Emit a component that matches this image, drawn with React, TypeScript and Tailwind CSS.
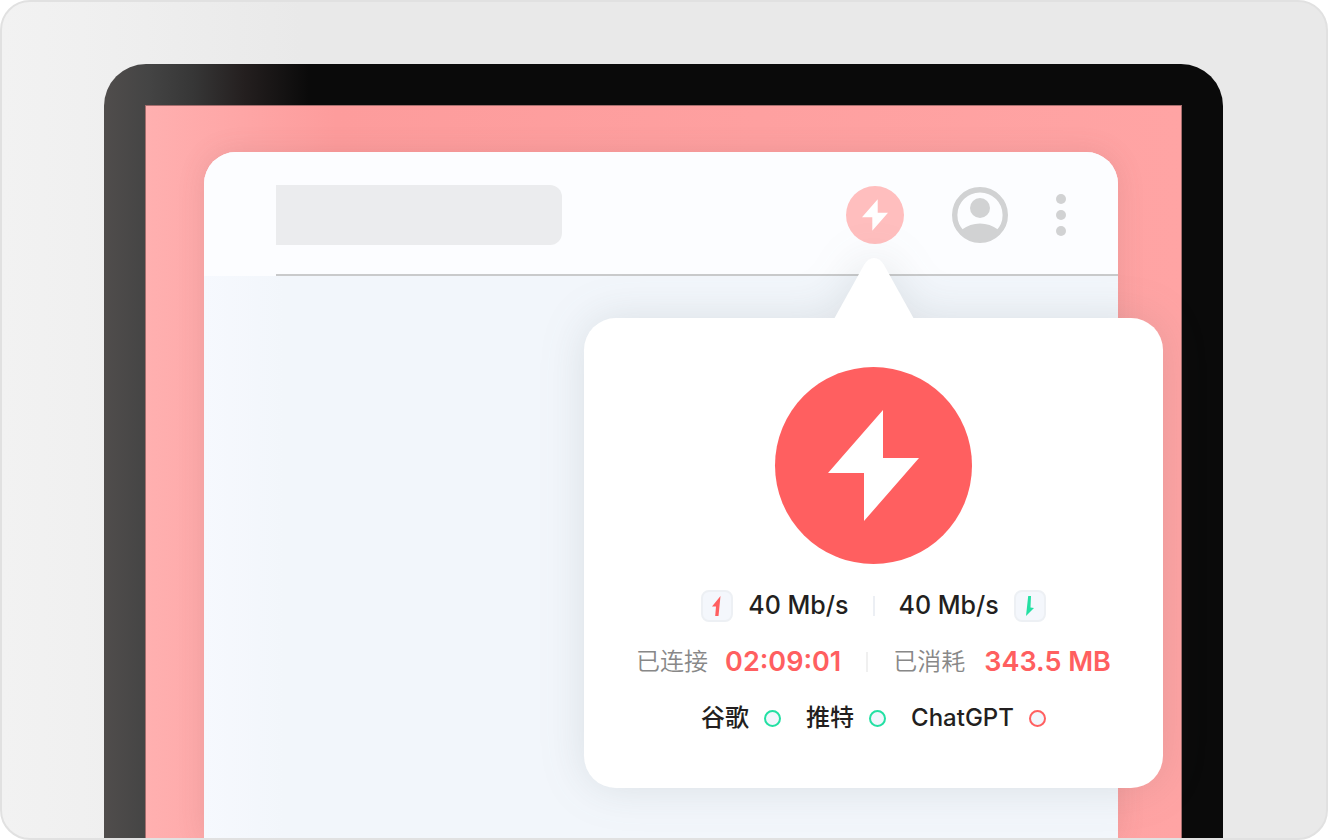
import React from "react";

function Bolt({ className }: { className: string }) {
  return (
    <svg viewBox="0 0 91 111" className={className} fill="currentColor" aria-hidden="true">
      <path d="M55 0V48H91L36 111V63H0Z" />
    </svg>
  );
}

function Divider({ className }: { className: string }) {
  return <span className={`h-5 w-0.5 shrink-0 ${className}`} />;
}

function SpeedBadge({ children, color }: { children: React.ReactNode; color: string }) {
  return (
    <span
      className={`flex size-8 shrink-0 items-center justify-center rounded-lg border-2 border-[#edf0f4] bg-[#f4f7fc] ${color}`}
    >
      {children}
    </span>
  );
}

function Site({ name, ring }: { name: string; ring: string }) {
  return (
    <li className="flex items-center gap-[15px]">
      <span>{name}</span>
      <span className={`size-[17px] rounded-full border-2 bg-[#f2f6fc] ${ring}`} />
    </li>
  );
}

function Toolbar() {
  return (
    <header className="rounded-t-[32px] bg-[#fcfdff] pl-[72px]">
      <div className="flex h-[124px] items-center border-b-2 border-[#c9cacb] pt-1 pr-[51px]">
        <input
          aria-label="Address"
          className="h-[60px] w-[286px] rounded-r-xl bg-[#ebecee] px-4 outline-none"
        />
        <button
          aria-label="Connection"
          className="ml-auto flex size-[58px] items-center justify-center rounded-full bg-[#ffbebe] text-white"
        >
          <Bolt className="h-8 w-[26px]" />
        </button>
        <button aria-label="Account" className="ml-12 size-14 text-[#d1d2d3]">
          <svg viewBox="0 0 56 56" className="size-14" aria-hidden="true">
            <circle cx="28" cy="28" r="25.3" fill="none" stroke="currentColor" strokeWidth="5.4" />
            <circle cx="28" cy="21" r="10" fill="currentColor" />
            <path d="M10 42.5Q18 36.5 28 36.5T46 42.5Q39 53 28 53T10 42.5Z" fill="currentColor" />
          </svg>
        </button>
        <button aria-label="More" className="ml-[47px] flex w-3 flex-col items-center gap-1.5">
          <span className="size-2.5 rounded-full bg-[#d1d2d3]" />
          <span className="size-2.5 rounded-full bg-[#d1d2d3]" />
          <span className="size-2.5 rounded-full bg-[#d1d2d3]" />
        </button>
      </div>
    </header>
  );
}

function StatusPopup() {
  return (
    <section
      aria-label="Connection status"
      className="absolute top-[166px] -right-[45px] flex h-[470px] w-[579px] flex-col items-center rounded-[32px] bg-white pt-[49px] drop-shadow-[0_0_22px_rgba(80,90,90,0.14)]"
    >
      <svg
        viewBox="0 0 80 61"
        className="absolute -top-[60px] left-[250px] h-[61px] w-20 text-white"
        fill="currentColor"
        aria-hidden="true"
      >
        <path d="M0 61L30 7Q34 0 40 0T50 7L80 61Z" />
      </svg>
      <button
        aria-label="Disconnect"
        className="flex size-[197px] shrink-0 items-center justify-center rounded-full bg-[#ff5f60] text-white"
      >
        <Bolt className="h-[111px] w-[91px]" />
      </button>
      <div className="mt-[26px] flex h-8 items-center text-[25px] font-medium whitespace-nowrap">
        <SpeedBadge color="text-[#ff5f60]">
          <svg viewBox="0 0 10 20" className="h-5 w-2.5" fill="currentColor" aria-hidden="true">
            <path d="M8.500 0L0 10.500H4L3.200 20H6.500Z" />
          </svg>
        </SpeedBadge>
        <span className="ml-[15px]">40 Mb/s</span>
        <Divider className="mx-6 bg-[#eceff4]" />
        <span className="mr-[15px]">40 Mb/s</span>
        <SpeedBadge color="text-[#23e0a3]">
          <svg viewBox="0 0 10 20" className="h-5 w-2.5" fill="currentColor" aria-hidden="true">
            <path d="M3.200 0H6L5.500 11.500L9 12L1 20Z" />
          </svg>
        </SpeedBadge>
      </div>
      <div className="mt-5 flex h-10 items-center text-[27px] font-semibold whitespace-nowrap text-[#ff5f60]">
        <span className="mr-[17px] text-2xl font-[350] text-[#888888]">已连接</span>
        <span>02:09:01</span>
        <Divider className="mx-[25px] bg-[#f0f0f0]" />
        <span className="mr-[19px] text-2xl font-[350] text-[#888888]">已消耗</span>
        <span>343.5 MB</span>
      </div>
      <ul className="mt-4 flex h-10 items-center gap-[25px] text-2xl font-medium whitespace-nowrap">
        <Site name="谷歌" ring="border-[#23e0a3]" />
        <Site name="推特" ring="border-[#23e0a3]" />
        <Site name="ChatGPT" ring="border-[#ff5f60]" />
      </ul>
    </section>
  );
}

export default function App() {
  return (
    <main className="flex min-h-screen flex-col overflow-hidden rounded-[30px] border-2 border-[#e1e1e1] bg-[linear-gradient(90deg,#f2f2f2_0,#f0f0f0_80px,#e9e9e9_300px)] px-[102px] pt-[62px] font-['Inter','Noto_Sans_CJK_SC',sans-serif] text-[#231f20]">
      <div className="mr-px flex flex-1 flex-col rounded-t-[42px] bg-[linear-gradient(90deg,#504d4c_0,#444444_45px,#363636_90px,#241f1f_140px,#0a0a0a_205px)] px-[41px] pt-[41px]">
        <div className="flex flex-1 flex-col border border-b-0 border-[#a56d6d] bg-[linear-gradient(90deg,#ffb0b0_0,#fd9c9c_190px,#ffa4a4_100%)] pt-[46px] pr-[63px] pl-[58px]">
          <div className="relative flex min-h-[686px] flex-1 flex-col rounded-t-[32px] bg-[linear-gradient(90deg,#f6f9fe_0,#f2f6fb_80px)] shadow-[0_0_28px_rgba(120,80,80,0.14)]">
            <Toolbar />
            <StatusPopup />
          </div>
        </div>
      </div>
    </main>
  );
}
